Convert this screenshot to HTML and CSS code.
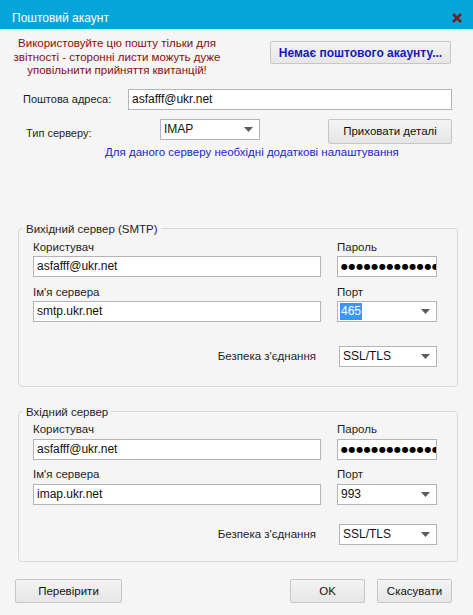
FILE: index.html
```html
<!DOCTYPE html>
<html lang="uk">
<head>
    <meta charset="UTF-8">
    <meta name="viewport" content="width=device-width, initial-scale=1.0">
    <title>Поштовий акаунт</title>
    <link rel="stylesheet" href="styles.css">
</head>
<body>
    <div class="dialog">
        <div class="titlebar">
            <span class="title">Поштовий акаунт</span>
            <button type="button" class="close" aria-label="Закрити">
                <svg width="10" height="10" viewBox="0 0 10 10">
                    <path d="M1 1L9 9M9 1L1 9" stroke="#7a1d1d" stroke-width="2.6" fill="none"/>
                </svg>
            </button>
        </div>

        <div class="content">
            <div class="notice-row">
                <p class="warning">Використовуйте цю пошту тільки для<br>звітності - сторонні листи можуть дуже<br>уповільнити прийняття квитанцій!</p>
                <button type="button" class="btn btn-account">Немає поштового акаунту...</button>
            </div>

            <div class="address-row">
                <label class="row-label" for="address">Поштова адреса:</label>
                <input class="textbox" id="address" type="text" value="asfafff@ukr.net">
            </div>

            <div class="server-row">
                <span class="row-label">Тип серверу:</span>
                <div class="combo combo-type">
                    <span>IMAP</span>
                    <svg class="arrow" width="9" height="5" viewBox="0 0 9 5"><path d="M0 0H9L4.5 5Z" fill="#5c5c5c"/></svg>
                </div>
                <button type="button" class="btn btn-details">Приховати деталі</button>
            </div>
            <p class="hint">Для даного серверу необхідні додаткові налаштування</p>

            <!-- Outgoing server -->
            <fieldset class="group group-out">
                <legend>Вихідний сервер (SMTP)</legend>
                <div class="grid">
                    <div class="cell">
                        <label>Користувач</label>
                        <input class="textbox" type="text" value="asfafff@ukr.net">
                    </div>
                    <div class="cell">
                        <label>Пароль</label>
                        <div class="textbox secret">●●●●●●●●●●●●●</div>
                    </div>
                    <div class="cell">
                        <label>Ім'я сервера</label>
                        <input class="textbox" type="text" value="smtp.ukr.net">
                    </div>
                    <div class="cell">
                        <label>Порт</label>
                        <div class="combo">
                            <span class="selected">465</span>
                            <svg class="arrow" width="9" height="5" viewBox="0 0 9 5"><path d="M0 0H9L4.5 5Z" fill="#5c5c5c"/></svg>
                        </div>
                    </div>
                </div>
                <div class="security-row">
                    <span>Безпека з'єднання</span>
                    <div class="combo">
                        <span>SSL/TLS</span>
                        <svg class="arrow" width="9" height="5" viewBox="0 0 9 5"><path d="M0 0H9L4.5 5Z" fill="#5c5c5c"/></svg>
                    </div>
                </div>
            </fieldset>

            <!-- Incoming server -->
            <fieldset class="group group-in">
                <legend>Вхідний сервер</legend>
                <div class="grid">
                    <div class="cell">
                        <label>Користувач</label>
                        <input class="textbox" type="text" value="asfafff@ukr.net">
                    </div>
                    <div class="cell">
                        <label>Пароль</label>
                        <div class="textbox secret">●●●●●●●●●●●●●</div>
                    </div>
                    <div class="cell">
                        <label>Ім'я сервера</label>
                        <input class="textbox" type="text" value="imap.ukr.net">
                    </div>
                    <div class="cell">
                        <label>Порт</label>
                        <div class="combo">
                            <span>993</span>
                            <svg class="arrow" width="9" height="5" viewBox="0 0 9 5"><path d="M0 0H9L4.5 5Z" fill="#5c5c5c"/></svg>
                        </div>
                    </div>
                </div>
                <div class="security-row">
                    <span>Безпека з'єднання</span>
                    <div class="combo">
                        <span>SSL/TLS</span>
                        <svg class="arrow" width="9" height="5" viewBox="0 0 9 5"><path d="M0 0H9L4.5 5Z" fill="#5c5c5c"/></svg>
                    </div>
                </div>
            </fieldset>

            <div class="actions">
                <button type="button" class="btn btn-check">Перевірити</button>
                <button type="button" class="btn btn-ok">OK</button>
                <button type="button" class="btn btn-cancel">Скасувати</button>
            </div>
        </div>
    </div>
</body>
</html>
```

FILE: styles.css
```css
/* General Styles */
* {
    box-sizing: border-box;
}

body {
    margin: 0;
    background-color: #f5f5f5;
    font-family: 'Liberation Sans', Arial, sans-serif;
    font-size: 11px;
    color: #1e1e1e;
}

.dialog {
    width: 473px;
    height: 615px;
    background-color: #f5f5f5;
}

/* Title Bar */
.titlebar {
    height: 29px;
    background-color: #04a6da;
    display: flex;
    align-items: center;
    justify-content: space-between;
    padding: 6px 11px 0 12px;
}

.title {
    color: #fff;
    font-size: 12px;
}

.close {
    width: 10px;
    height: 10px;
    padding: 0;
    border: none;
    background: none;
    display: flex;
}

/* Content */
.content {
    padding: 8px 21px 0 15px;
}

.notice-row {
    display: flex;
    justify-content: space-between;
    align-items: flex-start;
}

.warning {
    margin: 0 0 0 -3px;
    width: 210px;
    text-align: center;
    font-size: 11.5px;
    line-height: 13.5px;
    color: #8a0d0d;
}

/* Buttons */
.btn {
    font-family: inherit;
    font-size: 11.5px;
    color: #111;
    height: 24px;
    padding: 0;
    border: 1px solid #c6c6c6;
    border-radius: 2px;
    background: linear-gradient(#f4f4f4, #e6e6e6);
}

.btn-account {
    width: 181px;
    height: 23px;
    margin: 4px 1px 0 0;
    font-size: 12px;
    font-weight: bold;
    color: #1616c2;
}

.btn-details {
    width: 124px;
    height: 25px;
    margin-left: auto;
}

/* Form Rows */
.row-label {
    line-height: 16px;
}

.address-row {
    display: flex;
    align-items: center;
    margin-top: 11px;
}

.address-row .row-label {
    width: 113px;
    padding-left: 8px;
}

.address-row .textbox {
    flex: 1;
}

.server-row {
    display: flex;
    align-items: center;
    margin-top: 9px;
}

.server-row .row-label {
    width: 145px;
    padding-left: 11px;
    padding-top: 3px;
}

.combo-type {
    width: 100px;
    height: 20px;
    align-self: flex-start;
    padding-right: 5px;
}

.hint {
    margin: 0;
    padding-left: 90px;
    line-height: 16px;
    font-size: 11.5px;
    color: #2222d4;
}

/* Inputs */
.textbox {
    height: 21px;
    border: 1px solid #b4b4b4;
    background-color: #fff;
    padding: 0 3px;
    font-family: inherit;
    font-size: 12px;
    color: #111;
    outline: none;
    width: 100%;
}

.secret {
    display: flex;
    align-items: center;
    overflow: hidden;
    white-space: nowrap;
    font-family: 'DejaVu Sans', sans-serif;
    font-size: 8px;
    letter-spacing: 0.6px;
    color: #000;
}

.combo {
    height: 21px;
    border: 1px solid #b4b4b4;
    background-color: #fff;
    display: flex;
    align-items: center;
    justify-content: space-between;
    padding: 0 6px 0 3px;
    font-size: 12px;
    color: #111;
}

.combo .arrow {
    flex: none;
}

.selected {
    background-color: #3399ff;
    color: #fff;
    line-height: 17px;
    padding: 0 1px;
    margin-left: -1px;
}

/* Group Boxes */
.group {
    margin: 61px -6px 0 3px;
    padding: 2px 20px 19px 14px;
    border: 1px solid #d7d7d7;
    border-radius: 4px;
    min-width: 0;
}

.group legend {
    padding: 0 3px;
    margin-left: -10px;
    line-height: 16px;
    font-size: 11.5px;
}

.grid {
    display: grid;
    grid-template-columns: 288px minmax(0, 1fr);
    column-gap: 16px;
    row-gap: 7px;
}

.cell label {
    display: block;
    line-height: 16px;
    margin-bottom: 1px;
    font-size: 11.5px;
}

.security-row {
    display: flex;
    justify-content: flex-end;
    align-items: center;
    gap: 23px;
    margin-top: 24px;
    font-size: 11.5px;
}

.security-row .combo {
    width: 98px;
}

.group-in {
    margin-top: 17px;
    padding-top: 1px;
    padding-bottom: 16px;
}

.group-in .grid {
    row-gap: 6px;
}

.group-in .cell label {
    margin-bottom: 2px;
}

.group-in .security-row {
    margin-top: 19px;
}

/* Footer */
.actions {
    display: flex;
    gap: 12px;
    margin-top: 17px;
}

.btn-check {
    width: 107px;
    margin-right: auto;
}

.btn-ok,
.btn-cancel {
    width: 75px;
}
```
